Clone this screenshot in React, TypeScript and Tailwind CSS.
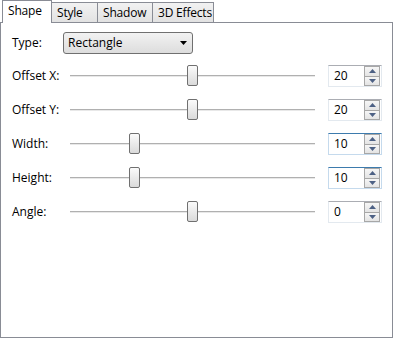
import { useState } from 'react'

const tabs = [
  { name: 'Shape', w: 'w-[50px]' },
  { name: 'Style', w: 'w-[47px]' },
  { name: 'Shadow', w: 'w-[56px]' },
  { name: '3D Effects', w: 'w-[62px]' },
]

const rows = [
  { label: 'Offset X:', value: 20, min: -20, max: 60, focus: false },
  { label: 'Offset Y:', value: 20, min: -20, max: 60, focus: false },
  { label: 'Width:', value: 10, min: 0, max: 40, focus: true },
  { label: 'Height:', value: 10, min: 0, max: 40, focus: true },
  { label: 'Angle:', value: 0, min: -180, max: 180, focus: false },
]

function Slider({ value, min, max }: { value: number; min: number; max: number }) {
  const pct = (value - min) / (max - min)
  return (
    <div className="relative h-[22px] w-[245px]">
      <div className="absolute left-0 right-0 top-[10px] h-px bg-[#b0b0b0]" />
      <div className="absolute left-0 right-0 top-[11px] h-px bg-[#e8e8e8]" />
      <div
        className="absolute top-0 h-[21px] w-[11px] rounded-[2px] border border-[#707070] bg-gradient-to-b from-[#fbfbfb] to-[#dadada]"
        style={{ left: `${pct * 234}px` }}
      />
    </div>
  )
}

function Spin({ value, focus }: { value: number; focus: boolean }) {
  return (
    <div
      className={
        'flex h-[22px] w-[54px] items-center border bg-white pl-[5px] pr-[1px] ' +
        (focus ? 'border-[#c5daed] border-t-[#3d7bad]' : 'border-[#e3e9ef] border-t-[#abadb3]')
      }
    >
      <span className="flex-1 text-[12px] leading-none">{value}</span>
      <div className="flex h-[20px] w-[16px] flex-col border border-[#a7a7a7]">
        <div className="flex flex-1 items-center justify-center border-b border-[#a7a7a7] bg-gradient-to-b from-[#f6f6f6] to-[#e4e4e4]">
          <svg width="7" height="4" viewBox="0 0 7 4"><path d="M3.5 0L7 4H0z" fill="#4d6185" /></svg>
        </div>
        <div className="flex flex-1 items-center justify-center bg-gradient-to-b from-[#f6f6f6] to-[#e4e4e4]">
          <svg width="7" height="4" viewBox="0 0 7 4"><path d="M0 0h7L3.5 4z" fill="#4d6185" /></svg>
        </div>
      </div>
    </div>
  )
}

export default function App() {
  const [active, setActive] = useState(0)

  return (
    <div className="h-[339px] w-[395px] bg-white text-black" style={{ fontFamily: '"Open Sans", "Noto Sans", sans-serif' }}>
      {/* tab strip */}
      <div className="flex h-[22px] items-end pl-[2px]">
        {tabs.map((t, i) =>
          i === active ? (
            <button
              key={t.name}
              onClick={() => setActive(i)}
              className={`relative z-10 -mb-px h-[23px] ${t.w} whitespace-nowrap border border-b-0 border-[#898c95] bg-white pb-[2px] pl-[5px] text-left text-[12px] leading-none tracking-[-0.2px]`}
            >
              {t.name}
            </button>
          ) : (
            <button
              key={t.name}
              onClick={() => setActive(i)}
              className={`-ml-px h-[20px] ${t.w} whitespace-nowrap border border-b-0 border-[#898c95] bg-gradient-to-b from-[#f2f2f2] to-[#e2e2e2] pl-[5px] pt-[1px] text-left text-[12px] leading-none tracking-[-0.2px]`}
            >
              {t.name}
            </button>
          )
        )}
      </div>

      {/* panel */}
      <div className="h-[316px] w-[393px] border border-[#898c95] bg-white pl-[11px] pt-[9px]">
        <div className="flex h-[22px] items-center">
          <span className="w-[51px] text-[12px]">Type:</span>
          <div className="flex h-[22px] w-[130px] items-center rounded-[3px] border border-[#707070] bg-gradient-to-b from-[#f2f2f2] to-[#dddddd] pl-[4px] pr-[5px]">
            <span className="flex-1 text-[12px]">Rectangle</span>
            <svg width="7" height="4" viewBox="0 0 7 4"><path d="M0 0h7L3.5 4z" fill="#000" /></svg>
          </div>
        </div>

        <div className="mt-[11px] flex flex-col gap-[12px]">
          {rows.map(r => (
            <div key={r.label} className="flex h-[22px] items-center">
              <span className="w-[58px] text-[12px]">{r.label}</span>
              <Slider value={r.value} min={r.min} max={r.max} />
              <div className="ml-[13px]">
                <Spin value={r.value} focus={r.focus} />
              </div>
            </div>
          ))}
        </div>
      </div>
    </div>
  )
}
